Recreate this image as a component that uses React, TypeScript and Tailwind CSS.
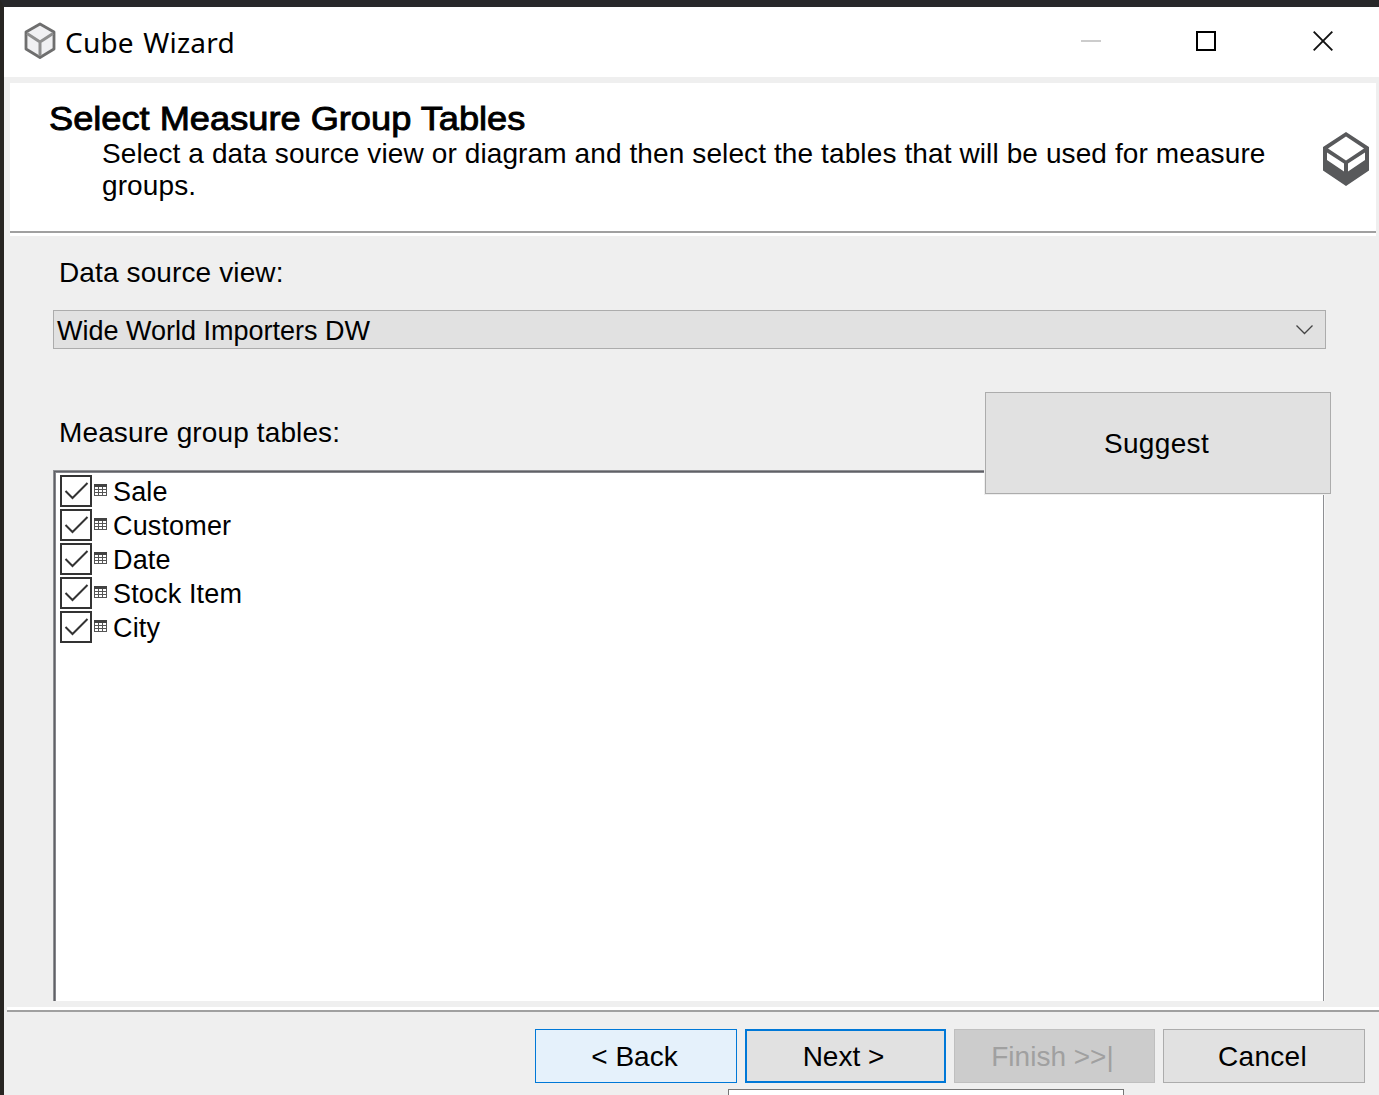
import React from 'react';

const tables = ['Sale', 'Customer', 'Date', 'Stock Item', 'City'];

function SmallCube() {
  return (
    <svg className="mt-[5px] h-[38px] w-8" viewBox="0 0 32 38" fill="none">
      <path d="M16 2 L30 10 V27 L16 35.5 L2 27 V10 Z" fill="#f0f0f2" stroke="#6e6e6e" strokeWidth="2.8" strokeLinejoin="round" />
      <path d="M3 11.5 L16 20 L29 11.5 M16 20 V34" stroke="#8e8e8e" strokeWidth="3" />
    </svg>
  );
}

function LargeCube() {
  return (
    <svg className="h-[54px] w-[46px]" viewBox="0 0 46 54">
      <path fill="#58595b" fillRule="evenodd" d="M23 0 L46 15 V38.5 L23 54 L0 38.5 V15 Z M23 4.500 L41 16.500 L23 28.500 L5 16.500 Z M4 20.500 L21 31.500 V39.500 L4 28 Z M42 20.500 L25 31.500 V39.500 L42 28 Z" />
    </svg>
  );
}

function TableIcon() {
  return (
    <svg className="mt-[9px] ml-0.5 h-[13px] w-[13px]" viewBox="0 0 13 13" shapeRendering="crispEdges">
      <path fill="#424242" d="M0 0h13v3H0z" />
      <path fill="#555" d="M0 3h1v9H0zM4 3h1v9H4zM8 3h1v9H8zM12 3h1v9h-1zM0 5h13v1H0zM0 8h13v1H0zM0 11h13v1H0z" />
    </svg>
  );
}

function CheckRow({ name }: { name: string }) {
  return (
    <li className="flex h-[34px] items-start">
      <span className="h-8 w-8 border-2 border-[#333] bg-white">
        <svg className="h-7 w-7" viewBox="0 0 28 28" fill="none">
          <path d="M3.500 14 L10.500 21 L25.500 6" stroke="#333" strokeWidth="2" />
        </svg>
      </span>
      <TableIcon />
      <span className="ml-[6px] text-[27px] leading-[34px] tracking-[0.15px]">{name}</span>
    </li>
  );
}

export default function App() {
  return (
    <div className="flex h-[1095px] w-[1379px] flex-col overflow-hidden border-t-[7px] border-l-4 border-t-[#28282a] border-l-[#272522] bg-[#efefef] font-['Liberation_Sans',sans-serif] text-[28px] text-black">
      <header className="flex h-[70px] shrink-0 bg-white pl-5">
        <div className="pt-[10px]"><SmallCube /></div>
        <h1 className="mt-4 ml-[9px] grow font-['Noto_Sans',sans-serif] text-[28px] leading-[38px] tracking-[0.2px] [word-spacing:2px]">Cube Wizard</h1>
        <div className="flex pt-6 pr-[46px]">
          <span className="mt-[9px] h-0.5 w-5 bg-[#ccc]" />
          <span className="ml-[95px] h-5 w-5 border-2 border-black" />
          <svg className="ml-[97px] h-5 w-5" viewBox="0 0 20 20"><path d="M.7.700 L19.300 19.300 M19.300.700 L.7 19.300" stroke="#111" strokeWidth="1.900" /></svg>
        </div>
      </header>

      <section className="mt-[6px] mr-[3px] ml-[6px] flex h-[153px] shrink-0 border-b-[3px] border-white bg-white">
        <div className="flex w-full border-b-2 border-[#a0a0a0]">
          <div className="w-[1313px] shrink-0 pt-[15px] pl-10">
            <h2 className="-ml-px origin-left scale-x-[1.065] text-[34px] leading-10 whitespace-nowrap [-webkit-text-stroke:0.9px_black]">Select Measure Group Tables</h2>
            <p className="ml-[52px] w-[1200px] leading-8 tracking-[0.11px]">Select a data source view or diagram and then select the tables that will be used for measure<br />groups.</p>
          </div>
          <div className="pt-[49px]"><LargeCube /></div>
        </div>
      </section>

      <main className="flex h-[765px] shrink-0 flex-col pt-[21px] pl-[49px]">
        <label className="ml-[6px] leading-8 tracking-[0.12px]">Data source view:</label>
        <div className="mt-[21px] flex h-[39px] w-[1273px] items-center justify-between border border-[#acacac] bg-[#e1e1e1] pr-3 pl-[3px]">
          <span className="pt-[3px] text-[27px]">Wide World Importers DW</span>
          <svg className="h-[10px] w-[17px]" viewBox="0 0 17 10" fill="none"><path d="M.5.500 L8.500 8.500 L16.500.500" stroke="#444" strokeWidth="1.300" /></svg>
        </div>
        <div className="relative z-10 mt-[43px] flex h-[78px] w-[1278px] justify-between">
          <label className="mt-[25px] ml-[6px] leading-8 tracking-[0.12px]">Measure group tables:</label>
          <button className="h-[102px] w-[346px] border border-[#acacac] bg-[#e1e1e1] pt-0.5 pr-[3px] tracking-[0.35px] shadow-[-1px_1px_0_#efefef]">Suggest</button>
        </div>
        <ul className="h-[531px] w-[1271px] border-t border-r border-l border-[#8e8f93] bg-white pt-1 pl-[6px] shadow-[inset_1px_1px_0_#606166,inset_2px_2px_0_#85868c,1px_0_0_#f8f8f8]">
          {tables.map((name) => <CheckRow key={name} name={name} />)}
        </ul>
      </main>

      <footer className="mt-[6px] ml-[3px] flex h-[88px] shrink-0 flex-col border-t-[3px] border-white">
        <div className="flex justify-end gap-2 border-t-2 border-[#a0a0a0] pt-[17px] pr-[14px]">
          <button className="h-[54px] w-[202px] border border-[#0078d7] bg-[#e5f1fb] pt-0.5 pr-[3px]">&lt; Back</button>
          <button className="h-[54px] w-[201px] border-2 border-[#0078d7] bg-[#e1e1e1] pt-0.5 pr-1">Next &gt;</button>
          <button disabled className="h-[54px] w-[201px] border border-[#bfbfbf] bg-[#ccc] pt-0.5 pr-1 text-[#a0a0a0]">Finish &gt;&gt;|</button>
          <button className="h-[54px] w-[202px] border border-[#acacac] bg-[#e1e1e1] pt-0.5 pr-[3px] tracking-[0.3px]">Cancel</button>
        </div>
        <div className="mt-[6px] ml-[721px] h-[6px] w-[396px] border border-b-0 border-[#767676] bg-white" />
      </footer>
    </div>
  );
}
